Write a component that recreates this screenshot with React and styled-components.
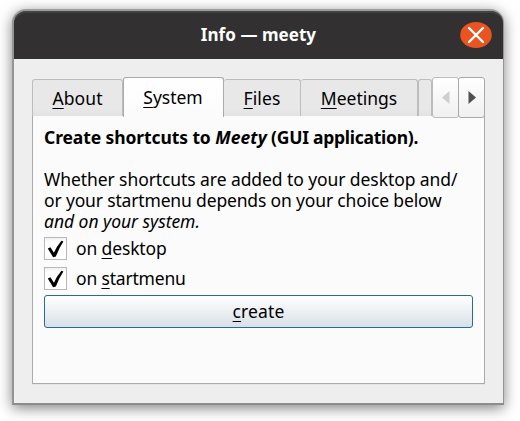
import React from "react";
import styled, { createGlobalStyle } from "styled-components";

const GlobalStyle = createGlobalStyle`
  * { box-sizing: border-box; }
  body {
    margin: 0;
    background: #fff;
    color: #000;
    font: 17.5px/21px "Noto Sans", "Open Sans", sans-serif;
  }
  button { font: inherit; color: inherit; margin: 0; padding: 0; }
`;

const Desktop = styled.main`
  width: 520px;
  height: 421px;
  padding: 9px 16px 16px 12px;
  overflow: hidden;
`;

const Window = styled.section`
  display: flex;
  flex-direction: column;
  width: 492px;
  height: 396px;
  border: 2px solid #949494;
  border-right-width: 1px;
  border-bottom-color: #8c8c8c;
  border-top-color: #9c9e9c;
  border-radius: 14px 14px 0 0;
  background: #eee;
  box-shadow: 0 3px 14px rgba(0, 0, 0, 0.5);
`;

const TitleBar = styled.header`
  display: grid;
  grid-template-columns: 1fr auto 1fr;
  align-items: center;
  flex: 0 0 48px;
  padding: 0 11px 0 0;
  border-radius: 12px 12px 0 0;
  background: #333031;
  box-shadow: inset 0 2px #444344;
`;

const Title = styled.h1`
  grid-column: 2;
  margin: -2px 0 0 11px;
  color: #fff;
  font-size: 17px;
  font-weight: 700;
  letter-spacing: 0.05px;
  white-space: pre;
`;

const CloseButton = styled.button`
  display: block;
  justify-self: end;
  width: 32px;
  height: 26px;
  border: 0;
  background: none;
  svg { display: block; }
`;

const Content = styled.div`
  display: flex;
  flex-direction: column;
  flex: 1;
  padding: 18px 18px 19px 18px;
`;

const TabBar = styled.nav`
  display: flex;
  align-items: flex-start;
  height: 39px;
`;

const Tab = styled.button`
  flex: 0 0 ${(p) => p.$width}px;
  height: ${(p) => (p.$active ? 40 : 37)}px;
  margin-top: ${(p) => (p.$active ? 0 : 2)}px;
  border: 1px solid ${(p) => (p.$active ? "#ababab" : "#bdbdbd")};
  border-bottom: 0;
  border-left-width: ${(p) => (p.$joined ? 0 : 1)}px;
  border-radius: 3px 3px 0 0;
  background: ${(p) =>
    p.$active ? "linear-gradient(#fff, #fbfbfb)" : "linear-gradient(#e8e8e8 80%, #e2e2e2)"};
  position: relative;
  z-index: ${(p) => (p.$active ? 1 : 0)};
  letter-spacing: ${(p) => p.$spacing || 0}px;
  line-height: ${(p) => (p.$active ? 39 : 37)}px;
  padding-right: ${(p) => (p.$active ? 1 : 0)}px;
  white-space: pre;
`;

const TabScroller = styled.div`
  display: flex;
  flex: 1;
`;

const ScrollButton = styled.button`
  display: grid;
  place-items: center;
  flex: 0 0 27px;
  height: 41px;
  border: 1px solid ${(p) => (p.disabled ? "#bcbcbc" : "#a9a9a9")};
  border-radius: 3px;
  background: linear-gradient(#fff, #f0f0f0);
  color: ${(p) => (p.disabled ? "#cfcfcf" : "#505050")};
  position: relative;
  z-index: 2;
  & + & { margin-left: -1px; }
`;

const Panel = styled.div`
  display: flex;
  flex-direction: column;
  flex: 1;
  padding: 11px 11px 0;
  border: 1px solid #ababab;
  border-top: 0;
  background: #fbfbfb;
  box-shadow: 0 1px #e4e4e4;
`;

const Heading = styled.h2`
  margin: 0 0 21px;
  font-size: inherit;
  font-weight: 700;
  white-space: pre;
`;

const Run = styled.span`
  letter-spacing: ${(p) => p.$spacing}px;
  font-style: ${(p) => (p.$italic ? "italic" : "normal")};
`;

const Paragraph = styled.p`
  display: flex;
  flex-direction: column;
  margin: 0 0 4px;
  white-space: pre;
`;

const CheckRow = styled.label`
  display: flex;
  align-items: center;
  gap: 9px;
  height: 24px;
  margin-bottom: 6px;
  letter-spacing: ${(p) => p.$spacing}px;
`;

const CheckBox = styled.span`
  width: 23px;
  height: 23px;
  border: 1px solid #b8b8b8;
  background: linear-gradient(#f0f0f0, #fff 4px);
  svg { display: block; }
`;

const CreateButton = styled.button`
  height: 33px;
  margin-top: -1px;
  border: 1px solid #266c96;
  border-radius: 3px;
  background: linear-gradient(#fff, #d8e0e7);
  letter-spacing: 0.1px;
`;

const Mnemonic = styled.span`
  text-decoration: underline;
  text-decoration-thickness: 1px;
  text-underline-offset: 3px;
  text-decoration-skip-ink: none;
`;

function Check() {
  return (
    <CheckBox>
      <svg width="21" height="21" viewBox="0 0 21 21" fill="none">
        <path d="M2.8 10.4 L5.4 9.3 L8.9 14.8 Q11.5 8.5 16.4 2.7 L18.4 3.4 Q14 10 10.9 18.4 L8.1 19.2 Z" fill="#000" />
      </svg>
    </CheckBox>
  );
}

export default function App() {
  return (
    <>
      <GlobalStyle />
      <Desktop>
        <Window>
          <TitleBar>
            <Title>Info — meety</Title>
            <CloseButton aria-label="Close">
              <svg width="32" height="26" viewBox="0 0 32 26">
                <ellipse cx="16" cy="13" rx="15.8" ry="13" fill="#e95420" />
                <path d="M9 6 L23 20 M23 6 L9 20" stroke="#fff" strokeWidth="2.4" strokeLinecap="round" />
              </svg>
            </CloseButton>
          </TitleBar>
          <Content>
            <TabBar>
              <Tab $width={91} $spacing={0.1}><Mnemonic>A</Mnemonic>bout</Tab>
              <Tab $width={101} $active><Mnemonic>S</Mnemonic>ystem</Tab>
              <Tab $width={77} $joined $spacing={0.1}><Mnemonic>F</Mnemonic>iles</Tab>
              <Tab $width={117} $joined><Mnemonic>M</Mnemonic>eetings</Tab>
              <Tab $width={14} aria-label="More" />
              <TabScroller>
                <ScrollButton disabled aria-label="Previous tabs">
                  <svg width="8" height="13"><path d="M7.5 0 V13 L0 6.5 Z" fill="currentColor" /></svg>
                </ScrollButton>
                <ScrollButton aria-label="Next tabs">
                  <svg width="8" height="13"><path d="M0.5 0 V13 L8 6.5 Z" fill="currentColor" /></svg>
                </ScrollButton>
              </TabScroller>
            </TabBar>
            <Panel>
              <Heading>
                <Run $spacing={-0.1}>Create shortcuts to </Run>
                <Run $spacing={0.1} $italic>Meety</Run>
                <Run $spacing={-0.26}> (GUI application).</Run>
              </Heading>
              <Paragraph>
                <Run $spacing={-0.08}>Whether shortcuts are added to your desktop and/</Run>
                <Run $spacing={-0.16}>or your startmenu depends on your choice below</Run>
                <Run $spacing={-0.04} $italic>and on your system.</Run>
              </Paragraph>
              <CheckRow $spacing={-0.14}>
                <Check />
                <span>on <Mnemonic>d</Mnemonic>esktop</span>
              </CheckRow>
              <CheckRow $spacing={-0.18}>
                <Check />
                <span>on <Mnemonic>s</Mnemonic>tartmenu</span>
              </CheckRow>
              <CreateButton><Mnemonic>c</Mnemonic>reate</CreateButton>
            </Panel>
          </Content>
        </Window>
      </Desktop>
    </>
  );
}
